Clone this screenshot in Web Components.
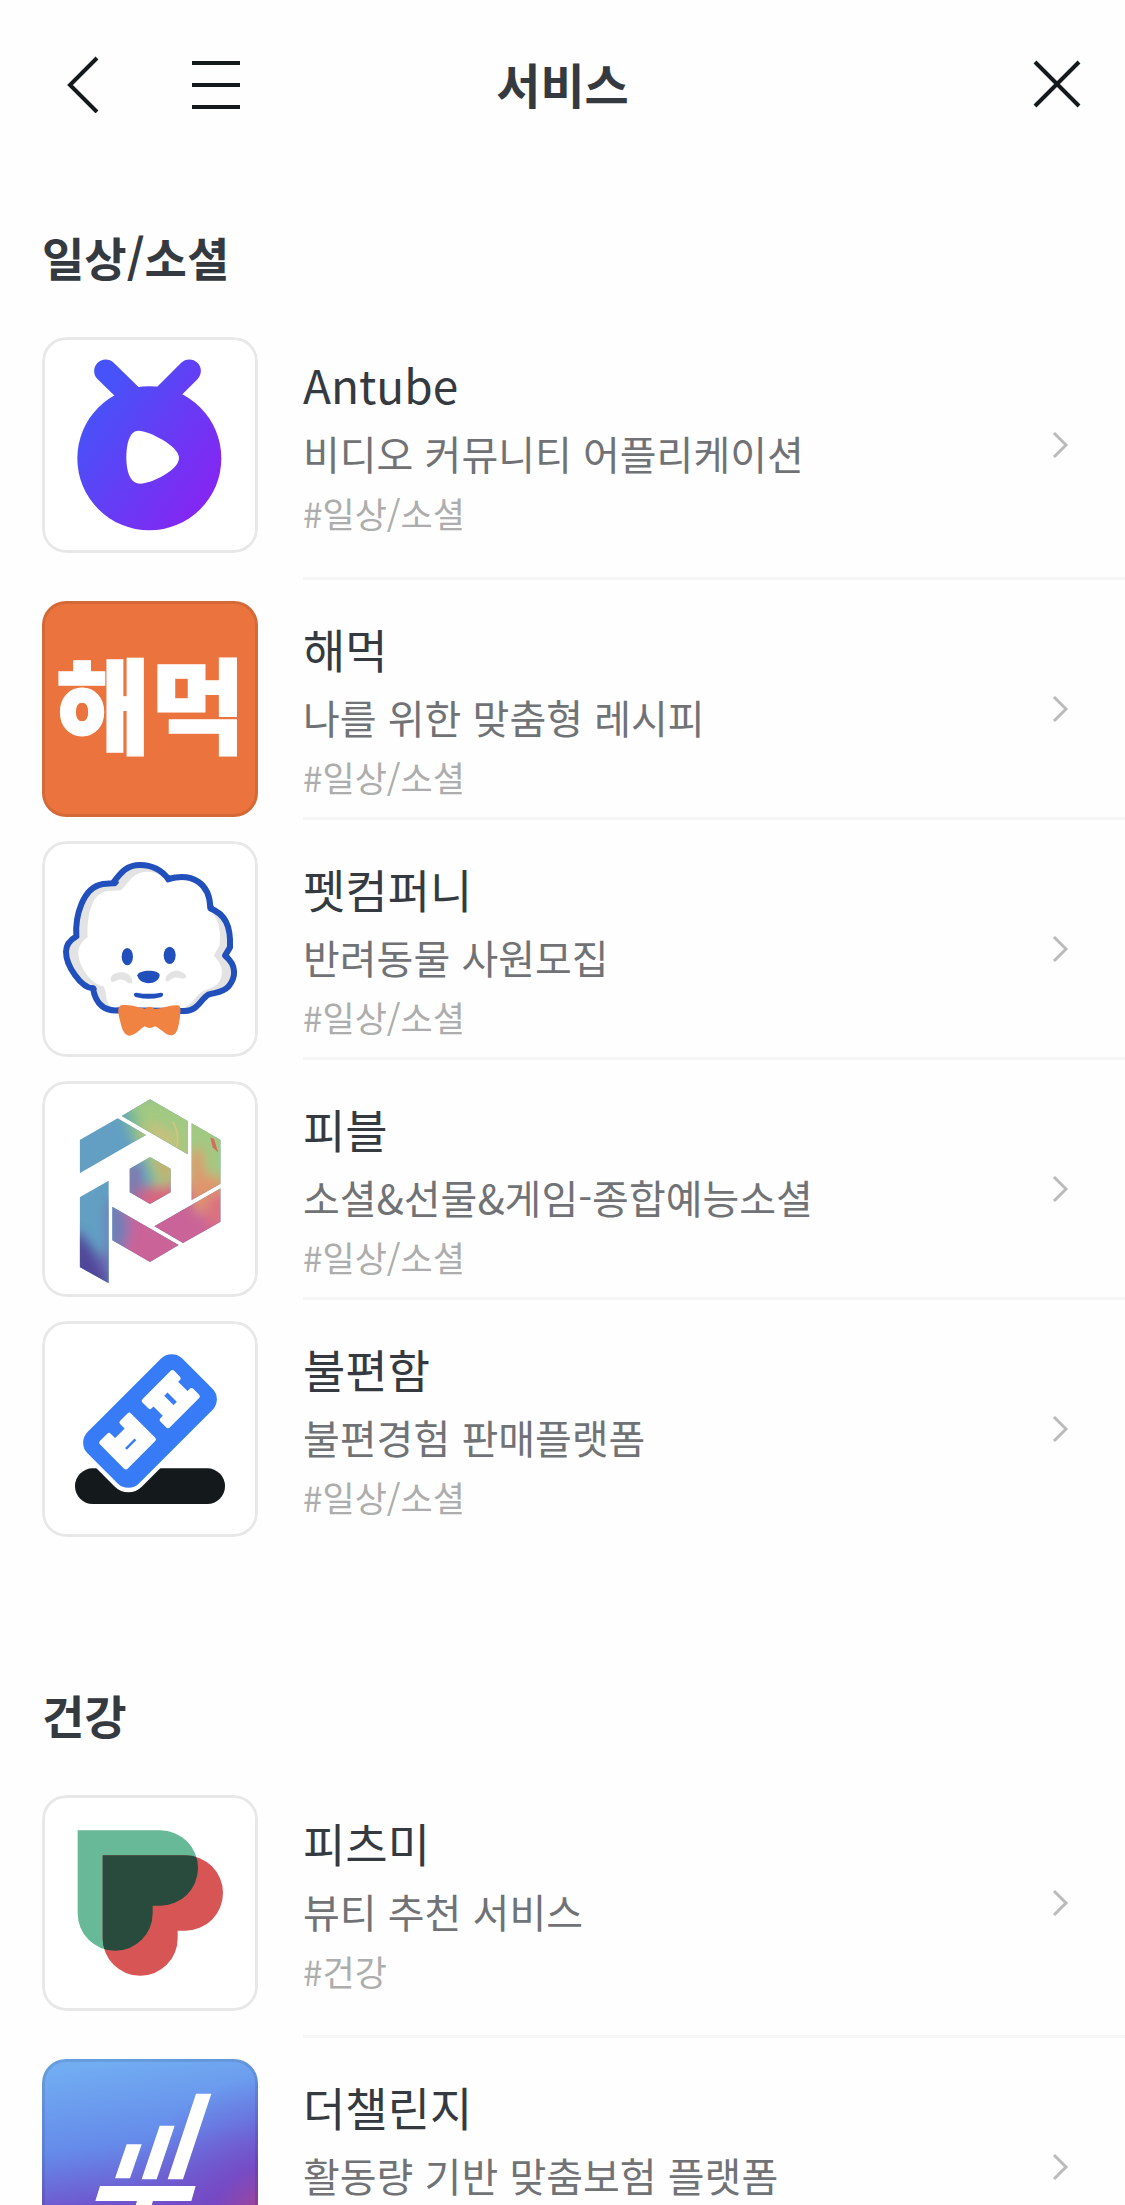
<!DOCTYPE html>
<html lang="ko">
<head>
<meta charset="utf-8">
<meta name="viewport" content="width=device-width, initial-scale=1">
<title>서비스</title>
<style>
  body {
    margin: 0;
    height: 100vh;
    display: flex;
    flex-direction: column;
    background: #fefefe;
    color: #343a40;
    font-family: 'Noto Sans CJK KR', sans-serif;
  }
  main {
    flex: 1;
    min-height: 0;
    overflow-y: auto;
    scrollbar-width: none;
  }
</style>
</head>
<body>
<app-bar>서비스</app-bar>
<main>
  <service-section>
    <span slot="title">일상/소셜</span>

    <service-item tall href="#antube">
      <svg slot="logo" viewBox="36 36 648 648" aria-hidden="true">
        <defs>
          <linearGradient id="antube" gradientUnits="userSpaceOnUse" x1="180" y1="240" x2="545" y2="490">
            <stop offset="0" stop-color="#4653f8"/>
            <stop offset="1" stop-color="#8327f2"/>
          </linearGradient>
        </defs>
        <rect x="36" y="36" width="648" height="648" fill="#fff"/>
        <path d="M227 138L340 248M478 138L368 248" stroke="url(#antube)" stroke-width="69" stroke-linecap="round"/>
        <circle cx="358" cy="400" r="216" fill="url(#antube)"/>
        <path d="M326 317C355 317 447 362 447 399C447 436 362 476 331 476C297 476 289 433 289 397C289 358 298 317 326 317Z" fill="#fff"/>
      </svg>
      <span slot="name">Antube</span>
      <span slot="desc">비디오 커뮤니티 어플리케이션</span>
      <span slot="tag">#일상/소셜</span>
    </service-item>

    <service-item href="#haemuk">
      <svg slot="logo" viewBox="36 33 648 648" aria-hidden="true">
        <rect x="36" y="33" width="648" height="648" fill="#eb733d"/>
        <text x="362" y="468" text-anchor="middle" font-size="310" font-weight="900" fill="#fff" stroke="#fff" stroke-width="4">해먹</text>
      </svg>
      <span slot="name">해먹</span>
      <span slot="desc">나를 위한 맞춤형 레시피</span>
      <span slot="tag">#일상/소셜</span>
    </service-item>

    <service-item href="#petcompany">
      <svg slot="logo" viewBox="36 33 648 648" aria-hidden="true">
        <defs>
          <path id="fur" d="M248 160C274 126 290 105 330 105C370 105 396 122 415 147C488 127 540 160 541 235C585 252 603 287 600 352L585 377C622 407 617 443 596 469C578 489 556 487 535 494C512 507 503 544 464 543L265 541C227 544 197 526 189 475C154 474 108 408 108 365C108 342 120 330 139 319C135 260 157 172 219 162Z"/>
          <clipPath id="fur-clip"><use href="#fur"/></clipPath>
        </defs>
        <rect x="36" y="33" width="648" height="648" fill="#fff"/>
        <use href="#fur" fill="#e3e3e3"/>
        <g clip-path="url(#fur-clip)">
          <path d="M273 181C298 155 311 125 352 125C380 125 398 138 415 157C480 137 530 165 535 240C562 256 574 292 569 345L551 377C584 407 580 443 562 463C541 479 520 479 506 494C491 507 481 530 452 535L250 535C224 526 233 492 221 469C181 464 143 405 145 364C148 342 160 331 173 322C170 271 180 184 236 183Z" fill="#fff"/>
        </g>
        <use href="#fur" fill="none" stroke="#2150bd" stroke-width="18" stroke-linejoin="round"/>
        <g fill="#2150bd">
          <path d="M230 162L248 151L268 155Q261 170 250 169ZM402 143L418 135 430 145Q419 160 410 157ZM532 232L550 226 555 241 538 243ZM133 306Q152 317 147 323L130 330ZM592 365L599 378 596 388 577 378ZM181 467Q196 461 201 478L185 485Z"/>
          <ellipse cx="292" cy="380" rx="17" ry="26"/>
          <ellipse cx="419" cy="376" rx="18" ry="26"/>
          <path d="M322 436C326 418 386 418 389 435C387 466 328 469 322 436Z"/>
          <path d="M319 488Q356 495 392 488C404 487 400 500 391 502Q356 511 320 502C309 499 310 487 319 488Z"/>
        </g>
        <g fill="#e3e3e3">
          <path d="M245 455C234 434 262 426 278 427C298 428 309 447 306 459C292 463 291 450 276 449C262 447 252 459 245 455ZM408 452C402 443 418 421 440 422C458 423 475 437 466 444C456 450 446 441 432 443C420 446 414 460 408 452Z"/>
        </g>
        <path d="M274 526C304 522 326 534 345 536Q359 524 374 537C397 535 421 524 444 526C456 530 450 551 449 568C444 599 440 615 424 616C405 616 393 596 375 589Q359 599 344 589C328 599 314 618 296 617C278 613 274 588 269 568C265 550 260 531 274 526Z" fill="#f08342"/>
      </svg>
      <span slot="name">펫컴퍼니</span>
      <span slot="desc">반려동물 사원모집</span>
      <span slot="tag">#일상/소셜</span>
    </service-item>

    <service-item href="#pibble">
      <svg slot="logo" viewBox="36 33 648 648" aria-hidden="true">
        <defs>
          <clipPath id="pibble">
            <path d="M149 210L263 145 348 195 149 310ZM275 138L360 88 473 153V253ZM485 160L572 210V341L485 390ZM572 355V455L459 519 373 469ZM247 410L446 525 360 576 247 511ZM236 332V640L149 591V382ZM360 261L422 296V367L360 402 299 367V296Z"/>
          </clipPath>
          <filter id="wash" x="-50%" y="-50%" width="200%" height="200%"><feGaussianBlur stdDeviation="17"/></filter>
        </defs>
        <rect x="36" y="33" width="648" height="648" fill="#fff"/>
        <g clip-path="url(#pibble)">
          <rect x="140" y="80" width="440" height="570" fill="#629fc3"/>
          <g filter="url(#wash)">
            <path d="M290 80L300 180 360 300 380 400 600 400V60Z" fill="#a2c982"/>
            <path d="M250 430L340 350 600 340V650H290Z" fill="#c96498"/>
            <path d="M230 390L285 400 300 480 270 570 230 540Z" fill="#727db7"/>
            <path d="M295 280L330 280 330 390 290 380Z" fill="#8a70a8"/>
            <path d="M330 360L440 340 430 410 340 410Z" fill="#d8657e"/>
            <path d="M340 180L365 160 440 200 440 240Z" fill="#d0bd7c"/>
            <path d="M480 250L515 230 525 310 590 330 590 430 500 430 480 370Z" fill="#df966d"/>
            <path d="M530 380L600 370 600 460 530 480Z" fill="#db7180"/>
            <path d="M120 480L160 500 210 570 250 660 120 650Z" fill="#51469a"/>
            <path d="M200 560L250 540V660Z" fill="#706fb6"/>
            <path d="M270 100L310 110 330 170 290 180Z" fill="#70b69c"/>
            <path d="M310 180L360 180 350 210Z" fill="#a0b978"/>
            <path d="M370 270L440 250 430 330 390 320Z" fill="#c5ad70"/>
          </g>
          <path d="M541 202L552 207 565 248 548 232Z" fill="#d86b5c"/>
          <path d="M428 155Q450 190 440 232" fill="none" stroke="#d5c47d" stroke-width="5"/>
        </g>
      </svg>
      <span slot="name">피블</span>
      <span slot="desc">소셜&amp;선물&amp;게임-종합예능소셜</span>
      <span slot="tag">#일상/소셜</span>
    </service-item>

    <service-item last href="#bulpyeonham">
      <svg slot="logo" viewBox="36 33 648 648" aria-hidden="true">
        <rect x="36" y="33" width="648" height="648" fill="#fff"/>
        <rect x="135" y="475" width="450" height="107" rx="53" fill="#14191c"/>
        <g transform="translate(360 333) rotate(-45)">
          <rect x="-214" y="-122" width="428" height="244" rx="57" fill="#fff"/>
          <rect x="-201" y="-109" width="402" height="218" rx="45" fill="#377cf6"/>
          <text y="71" text-anchor="middle" font-size="196" font-weight="900" fill="#fff" stroke="#fff" stroke-width="14" stroke-linejoin="round">ㅂㅍ</text>
        </g>
      </svg>
      <span slot="name">불편함</span>
      <span slot="desc">불편경험 판매플랫폼</span>
      <span slot="tag">#일상/소셜</span>
    </service-item>
  </service-section>

  <service-section>
    <span slot="title">건강</span>

    <service-item tall href="#fitsme">
      <svg slot="logo" viewBox="36 45 648 648" aria-hidden="true">
        <defs>
          <path id="heart" d="M143 151H391A113 113 0 0 1 391 377H368V400A112 112 0 0 1 143 400Z"/>
          <clipPath id="heart-clip"><use href="#heart"/></clipPath>
        </defs>
        <rect x="36" y="45" width="648" height="648" fill="#fff"/>
        <use href="#heart" fill="#68b997"/>
        <use href="#heart" x="75" y="75" fill="#d75555"/>
        <g clip-path="url(#heart-clip)"><use href="#heart" x="75" y="75" fill="#284b3e"/></g>
      </svg>
      <span slot="name">피츠미</span>
      <span slot="desc">뷰티 추천 서비스</span>
      <span slot="tag">#건강</span>
    </service-item>

    <service-item href="#thechallenge">
      <svg slot="logo" viewBox="36 42 648 648" aria-hidden="true">
        <defs>
          <linearGradient id="dusk" x1=".35" y1="0" x2=".5" y2="1">
            <stop offset="0" stop-color="#72adf2"/>
            <stop offset=".38" stop-color="#658bea"/>
            <stop offset=".7" stop-color="#714bc8"/>
            <stop offset="1" stop-color="#90429f"/>
          </linearGradient>
          <radialGradient id="glow" cx="1.1" cy=".82" r=".75">
            <stop offset="0" stop-color="#c44470"/>
            <stop offset=".45" stop-color="#7848c2" stop-opacity=".85"/>
            <stop offset="1" stop-color="#6b5bd5" stop-opacity="0"/>
          </radialGradient>
        </defs>
        <rect x="36" y="42" width="648" height="648" fill="url(#dusk)"/>
        <rect x="36" y="42" width="648" height="648" fill="url(#glow)"/>
        <path d="M290 298H335L300 400H255ZM389 242H434L380 403H335ZM498 146H544L459 403H413ZM210 423H497L484 468H369L340 560H292L321 468H196Z" fill="#fff"/>
      </svg>
      <span slot="name">더챌린지</span>
      <span slot="desc">활동량 기반 맞춤보험 플랫폼</span>
    </service-item>
  </service-section>
</main>

<script>
'use strict';

class AppBar extends HTMLElement {
  constructor() {
    super()

    const innerHTML = `<style>
      :host {
        display: grid;
        grid-template-columns: 1fr auto 1fr;
        align-items: center;
        padding: 33px 32px 39px;
      }
      h1 {
        margin: 0;
        font-size: 48px;
        line-height: 100px;
        font-weight: 700;
      }
      nav {
        display: flex;
        gap: 32px;
      }
      button {
        display: block;
        width: 100px;
        height: 100px;
        padding: 0;
        border: none;
        background: none;
        cursor: pointer;
      }
      .close {
        justify-self: end;
        width: 72px;
      }
      svg {
        display: block;
        margin: auto;
        fill: none;
        stroke: #14191c;
        stroke-width: 4;
      }
    </style>
    <nav>
      <button type="button" aria-label="뒤로">
        <svg width="60" height="60"><path d="M45 5L18 32 45 59"/></svg>
      </button>
      <button type="button" aria-label="메뉴">
        <svg width="60" height="60"><path d="M8 10H56M8 32H56M8 54H56"/></svg>
      </button>
    </nav>
    <h1><slot></slot></h1>
    <button class="close" type="button" aria-label="닫기">
      <svg width="60" height="60"><path d="M8 9L52 53M52 9L8 53"/></svg>
    </button>`;
    let shadowRoot = this.attachShadow({mode: 'open'})
    shadowRoot.innerHTML = innerHTML
  }
}

class ServiceSection extends HTMLElement {
  constructor() {
    super()

    const innerHTML = `<style>
      :host {
        display: block;
        padding: 49px 0 93px 42px;
      }
      h2 {
        margin: 0 0 46px;
        font-size: 46px;
        line-height: 70px;
        font-weight: 700;
      }
      .list {
        display: flex;
        flex-direction: column;
        gap: 21px;
      }
    </style>
    <h2><slot name="title"></slot></h2>
    <div class="list"><slot></slot></div>`;
    let shadowRoot = this.attachShadow({mode: 'open'})
    shadowRoot.innerHTML = innerHTML
  }
}

class ServiceItem extends HTMLElement {
  constructor() {
    super()

    const innerHTML = `<style>
      :host {
        display: block;
      }
      a {
        display: flex;
        gap: 45px;
        color: inherit;
        text-decoration: none;
      }
      .logo {
        position: relative;
        flex: none;
        width: 216px;
        height: 216px;
        border-radius: 24px;
        overflow: hidden;
      }
      /* hairline drawn over the artwork */
      .logo::after {
        content: '';
        position: absolute;
        inset: 0;
        border: 3px solid rgba(0, 0, 0, .09);
        border-radius: 24px;
      }
      ::slotted(svg) {
        display: block;
        width: 100%;
        height: 100%;
      }
      .body {
        flex: 1;
        display: flex;
        align-items: flex-start;
        justify-content: space-between;
        border-bottom: 3px solid #f6f6f7;
      }
      :host([tall]) .body {
        padding-bottom: 24px;
      }
      :host([last]) .body {
        border-bottom: none;
      }
      .text {
        padding-top: 11px;
      }
      .name, .desc, .tag {
        display: block;
      }
      .name {
        font-size: 46px;
        line-height: 72px;
      }
      .desc {
        color: #707275;
        font-size: 40px;
        line-height: 66px;
      }
      .tag {
        color: #adadad;
        font-size: 35px;
        line-height: 54px;
      }
      .arrow {
        flex: none;
        width: 20px;
        height: 216px;
        margin-right: 55px;
        fill: none;
        stroke: #bbb;
        stroke-width: 3;
      }
    </style>
    <a>
      <span class="logo"><slot name="logo"></slot></span>
      <span class="body">
        <span class="text">
          <span class="name"><slot name="name"></slot></span>
          <span class="desc"><slot name="desc"></slot></span>
          <span class="tag"><slot name="tag"></slot></span>
        </span>
        <svg class="arrow" viewBox="0 0 20 216" aria-hidden="true"><path d="M4 96L16 108 4 120"/></svg>
      </span>
    </a>`;
    let shadowRoot = this.attachShadow({mode: 'open'})
    shadowRoot.innerHTML = innerHTML
  }

  connectedCallback() {
    this.shadowRoot.querySelector('a').href = this.getAttribute('href') || '#';
  }
}

customElements.define('app-bar', AppBar)
customElements.define('service-section', ServiceSection)
customElements.define('service-item', ServiceItem)
</script>
</body>
</html>
